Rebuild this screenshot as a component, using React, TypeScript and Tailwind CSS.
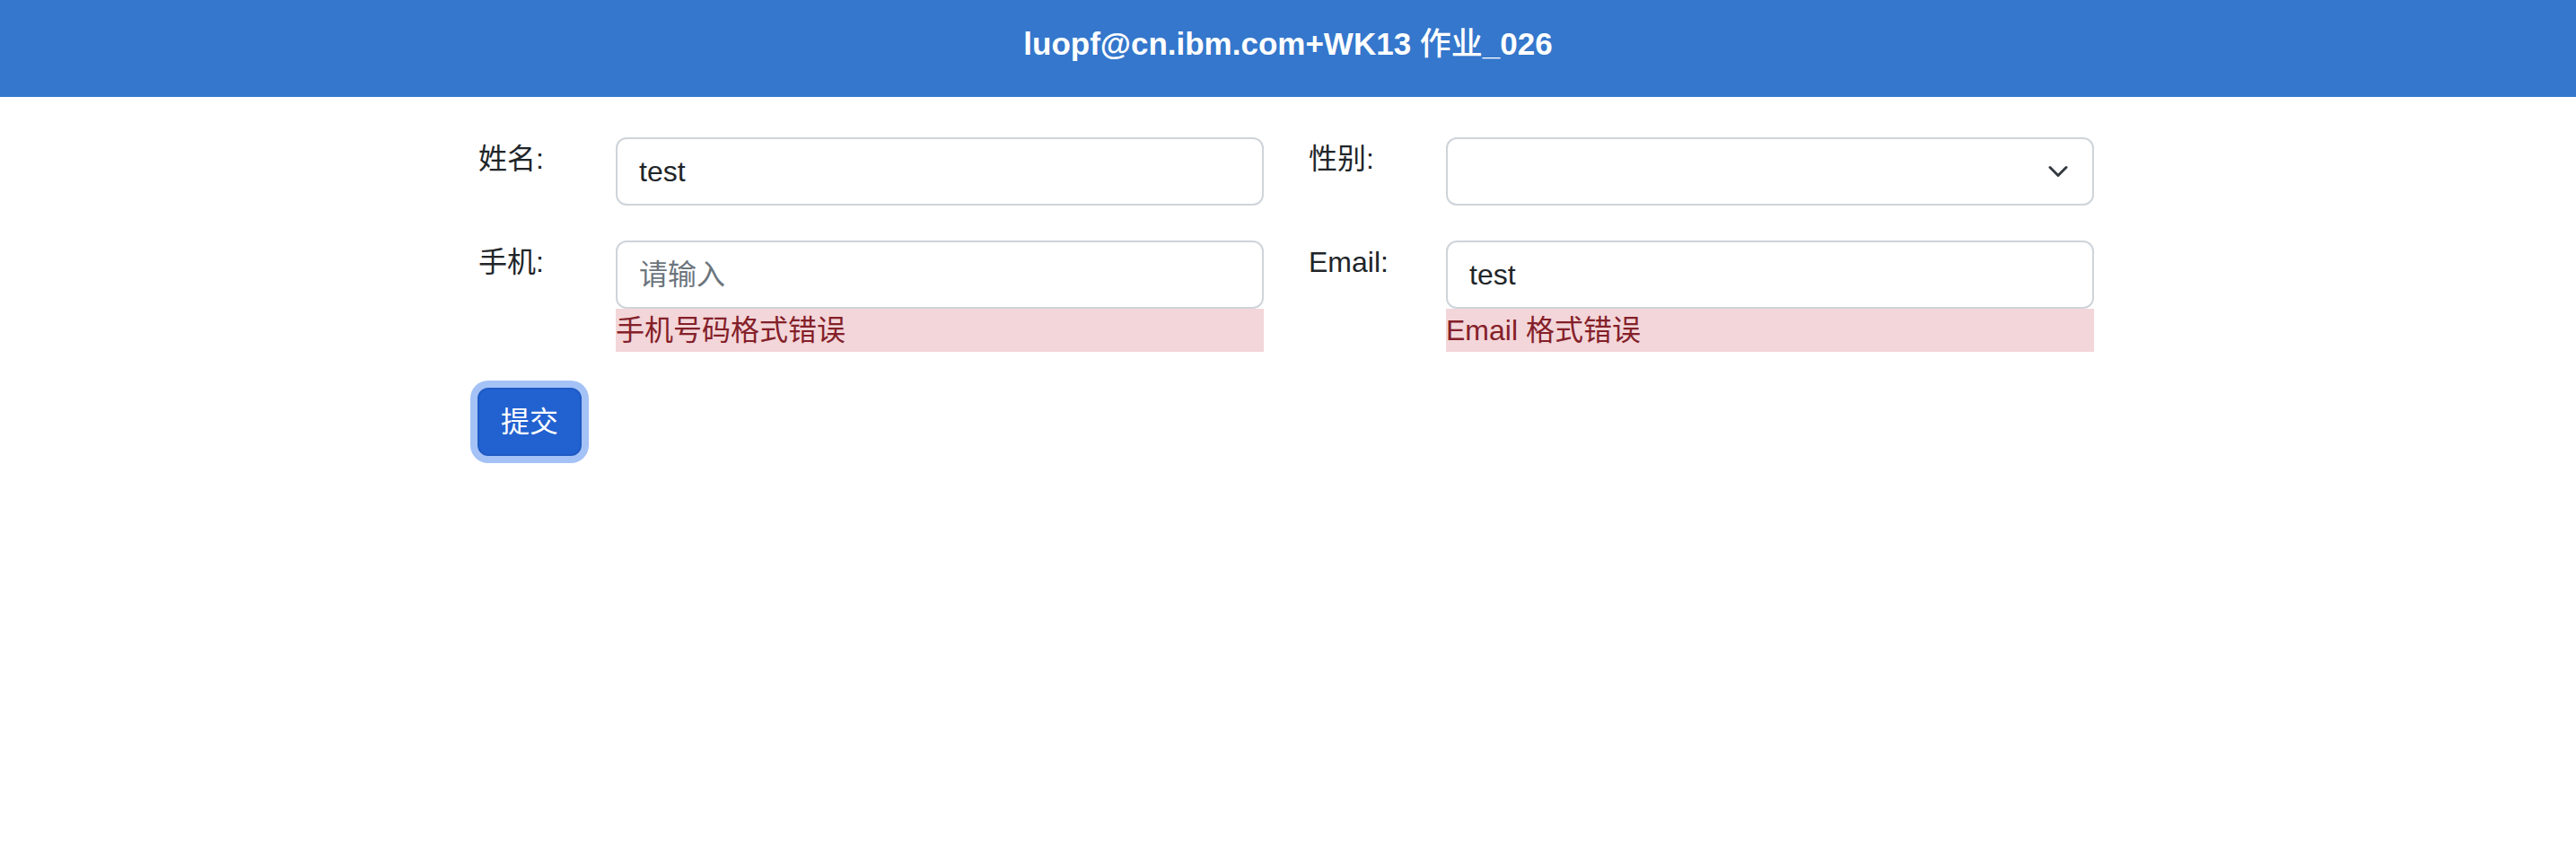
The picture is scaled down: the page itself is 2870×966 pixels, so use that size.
import React from "react";

const font = { fontFamily: '"Liberation Sans", "Noto Sans CJK SC", sans-serif' };

function Chevron() {
  return (
    <svg width="24" height="24" viewBox="0 0 16 16" fill="none">
      <path d="m2 5 6 6 6-6" stroke="#343a40" strokeWidth="2" strokeLinecap="round" strokeLinejoin="round" />
    </svg>
  );
}

function Field({ label, children }: { label: string; children: React.ReactNode }) {
  return (
    <div className="flex items-start">
      <div className="w-[153px] shrink-0 text-[32px] leading-[48px] text-[#212529]">{label}</div>
      <div className="flex-1 flex flex-col">{children}</div>
    </div>
  );
}

const inputCls =
  "w-full h-[76px] border-2 border-[#ced4da] rounded-[12px] px-[24px] text-[32px] leading-[48px] text-[#212529] bg-white outline-none placeholder:text-[#6c757d]";

function ErrorBox({ text }: { text: string }) {
  return <div className="bg-[#f3d6d9] text-[#842029] text-[32px] leading-[48px] h-[48px]">{text}</div>;
}

export default function App() {
  return (
    <div className="min-h-[966px] bg-white" style={font}>
      <header className="h-[108px] bg-[#3477cc] flex items-center justify-center pb-[12px]">
        <h1 className="text-white text-[35px] font-bold leading-none">
          luopf@cn.ibm.com+WK13 <span className="font-medium">作业</span>_026
        </h1>
      </header>
      <main className="w-[1804px] mx-auto pr-[4px] pt-[45px]">
        <div className="grid grid-cols-2 gap-x-[50px] gap-y-[39px]">
          <Field label="姓名:">
            <input className={inputCls} defaultValue="test" style={font} />
          </Field>
          <Field label="性别:">
            <div className="h-[76px] border-2 border-[#ced4da] rounded-[12px] bg-white flex items-center justify-end pr-[26px]">
              <Chevron />
            </div>
          </Field>
          <Field label="手机:">
            <input className={inputCls} placeholder="请输入" style={font} />
            <ErrorBox text="手机号码格式错误" />
          </Field>
          <Field label="Email:">
            <input className={inputCls} defaultValue="test" style={font} />
            <ErrorBox text="Email 格式错误" />
          </Field>
        </div>
        <div className="mt-[40px]">
          <button className="h-[76px] px-[24px] ml-[-1px] bg-[#2261d0] border-2 border-[#1e5ac4] rounded-[12px] text-white text-[32px] leading-[48px] shadow-[0_0_0_8px_#a4c2f6]">
            提交
          </button>
        </div>
      </main>
    </div>
  );
}
